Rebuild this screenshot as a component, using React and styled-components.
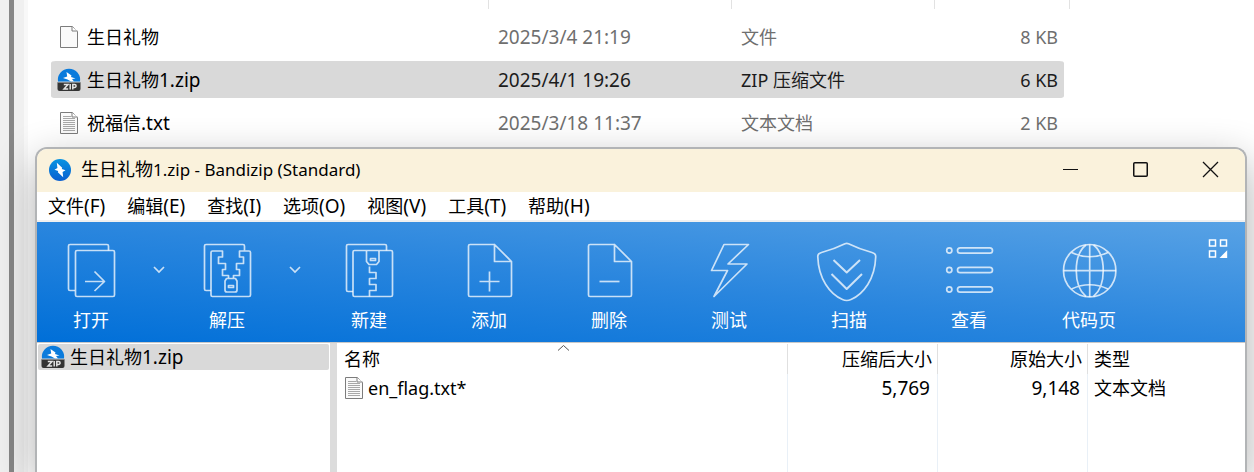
import React from 'react';
import styled, { createGlobalStyle } from 'styled-components';

const GlobalStyle = createGlobalStyle`
  * { box-sizing: border-box; }
  body {
    margin: 0;
    background: #fff;
    color: #000;
    font: 18px/24px "Noto Sans", "Noto Sans CJK SC", sans-serif;
  }
  button { font: inherit; color: inherit; border: 0; padding: 0; background: none; }
  table { border-collapse: separate; border-spacing: 0; table-layout: fixed; }
  th, td { padding: 0; font-weight: 400; text-align: left; white-space: nowrap; }
  svg { display: block; flex: none; overflow: visible; }
`;

const Desktop = styled.div`
  position: relative;
  display: flex;
  height: 100vh;
  overflow: hidden;
`;

const Gutter = styled.div`
  flex: none;
  width: 28px;
  display: flex;
  background: #f0f0f0;
  border-right: 4px solid #f8f8f8;
  padding-left: 9px;
`;

const Divider = styled.div`
  width: 5px;
  background: #878787;
`;

const Explorer = styled.main`
  flex: 1;
  min-width: 0;
  padding-left: 23px;
`;

const FileTable = styled.table`
  width: 1019px;
`;

const HeaderTick = styled.span`
  display: block;
  height: 9px;
  margin-bottom: 6px;
  border-right: 1px solid #e2e2e2;
`;

const FileCell = styled.td`
  height: 43px;
  padding-left: ${(p) => (p.$first ? 6 : 9)}px;
  padding-right: ${(p) => (p.$right ? 6 : 0)}px;
  text-align: ${(p) => (p.$right ? 'right' : 'left')};
  border: 0 solid transparent;
  border-width: 3px 0;
  background-clip: padding-box;
  background-color: ${(p) => (p.$selected ? '#d9d9d9' : 'transparent')};
  color: ${(p) => (p.$first ? '#000' : p.$selected ? '#1c1c1c' : '#6f6f6f')};
  border-radius: ${(p) => (p.$first ? '5px 0 0 5px' : p.$right ? '0 5px 5px 0' : '0')};
`;

const IconLabel = styled.span`
  display: flex;
  align-items: center;
  gap: ${(p) => p.$gap || 7}px;
`;

const Latin = styled.span`
  font-size: ${(p) => p.$size}px;
`;

const Window = styled.section`
  position: absolute;
  top: 147px;
  left: 35px;
  right: 7px;
  bottom: 0;
  display: flex;
  flex-direction: column;
  border: 2px solid #b2b4b6;
  border-bottom: 0;
  border-radius: 12px 12px 0 0;
  background: #fff;
  box-shadow: 0 14px 42px rgba(0, 0, 0, 0.32);
  overflow: hidden;
`;

const TitleBar = styled.header`
  flex: none;
  display: flex;
  align-items: center;
  height: 43px;
  padding: 0 0 2px 12px;
  background: #faf2dc;
`;

const Title = styled.h1`
  flex: 1;
  margin: 0 0 0 10px;
  font-size: 18px;
  line-height: 24px;
  font-weight: 400;
`;

const WindowButton = styled.button`
  display: grid;
  place-items: center;
  width: 70px;
  height: 41px;
`;

const MenuBar = styled.nav`
  flex: none;
  display: flex;
  gap: 22px;
  height: 30px;
  padding-left: 11px;
  border-bottom: 2px solid #f0f0f0;
`;

const MenuItem = styled.button`
  line-height: 28px;
  white-space: nowrap;
`;

const Toolbar = styled.div`
  flex: none;
  display: flex;
  height: 120px;
  background: linear-gradient(to top right, #006fd8, #2a86de 50%, #58a2e5);
  color: #fff;
`;

const ToolButton = styled.button`
  display: flex;
  flex-direction: column;
  align-items: center;
  gap: 7px;
  width: ${(p) => (p.$split ? 108 : 120)}px;
  padding-top: 19px;
`;

const DropButton = styled.button`
  display: flex;
  justify-content: center;
  width: 28px;
  padding-top: 44px;
`;

const LayoutButton = styled.button`
  align-self: flex-start;
  margin: 17px 17px 0 auto;
`;

const Panes = styled.div`
  flex: 1;
  display: flex;
  border-top: 1px solid #c8c8c8;
`;

const Tree = styled.aside`
  width: 300px;
  flex: none;
  padding: 1px;
  border-right: 7px solid #dcdcdc;
`;

const TreeItem = styled.button`
  display: flex;
  align-items: center;
  width: 100%;
  height: 26px;
  padding-left: 3px;
  border-radius: 2px;
  background: #d9d9d9;
`;

const Archive = styled.div`
  position: relative;
  flex: 1;
  min-width: 0;
  padding-top: 1px;
`;

const SortMark = styled.svg`
  position: absolute;
  top: 2px;
  left: 220px;
`;

const ArchiveTable = styled.table`
  width: 100%;
  height: 100%;
`;

const ArchiveHead = styled.th`
  height: 30px;
  padding: 0 ${(p) => (p.$right ? 5 : 0)}px 0 ${(p) => (p.$first ? 7 : 6)}px;
  text-align: ${(p) => (p.$right ? 'right' : 'left')};
  border-right: ${(p) => (p.$last ? 0 : 1)}px solid #e0e0e0;
`;

const ArchiveCell = styled.td`
  height: ${(p) => (p.$fill ? 'auto' : '28px')};
  padding: 0 ${(p) => (p.$right ? 7 : 0)}px 0 ${(p) => (p.$first ? 8 : 6)}px;
  text-align: ${(p) => (p.$right ? 'right' : 'left')};
  border-right: ${(p) => (p.$last ? 0 : 1)}px solid #e9f0f7;
`;

/* Latin runs take their own size beside the 18px Chinese ones. */
function Mixed({ children, latin = 19 }) {
  return children
    .split(/([\u4e00-\u9fff]+)/)
    .filter(Boolean)
    .map((run, i) => (/[\u4e00-\u9fff]/.test(run) ? run : <Latin key={i} $size={latin}>{run}</Latin>));
}

function ZipIcon() {
  return (
    <svg width="24" height="24" viewBox="0 0 24 24" aria-hidden="true">
      <path d="M1 14A11.200 11.200 0 1 1 23 14Z" fill="#0a7bdc" />
      <path d="M9.500 4L14.500 7.500L14 9L18.500 10.500L15 11L17 13.500H14L10.500 11.400L6 10L10.200 8.600Z" fill="#fff" />
      <path d="M.5 14h23v7a2 2 0 0 1-2 2h-19a2 2 0 0 1-2-2z" fill="#343434" />
      <path d="M.5 14h23" stroke="#cfd6dc" strokeWidth="1" />
      <path
        d="M6.800 16.500h4.200l-4 4.500h4.200M13.200 16v5.500M15.800 21.500v-5h1.800a1.300 1.300 0 0 1 0 3h-1.800"
        fill="none"
        stroke="#e4e4e4"
        strokeWidth="1.500"
      />
    </svg>
  );
}

function FileIcon({ lines }) {
  return (
    <svg width="18" height="22" viewBox="0 0 18 22" aria-hidden="true">
      <path d="M.5.5h12l5 5v16H.5z" fill="#fafafa" stroke="#7c7c7c" />
      <path d="M12 .5V5h5.500" fill="#fff" stroke="#7c7c7c" />
      {lines && (
        <path d="M3 4.500h8M3 6.500h12M3 8.500h12M3 10.500h12M3 12.500h12M3 14.500h12M3 16.500h12M3 18.500h12" stroke="#a8a8a8" />
      )}
    </svg>
  );
}

function AppIcon() {
  return (
    <svg width="22" height="22" viewBox="0 0 22 22" aria-hidden="true">
      <defs>
        <linearGradient id="app" x1="0" y1="0" x2="0" y2="1">
          <stop offset="0" stopColor="#0894e2" />
          <stop offset="1" stopColor="#0a5fd0" />
        </linearGradient>
      </defs>
      <circle cx="11" cy="11" r="11" fill="url(#app)" />
      <path d="M7.800 3.800L13.200 8.800L12.800 10L16.500 11.200L13.600 13L14.200 18.200L8.800 13.200L9.200 12L5.500 10.800L8.400 9Z" fill="#fff" />
    </svg>
  );
}

const glyphs = {
  open: (
    <>
      <path d="M14 49.500H9A1.500 1.500 0 0 1 7.500 48V5A1.500 1.500 0 0 1 9 3.500H46A1.500 1.500 0 0 1 47.500 5V9.500" />
      <rect x="14.500" y="9.500" width="39" height="46" rx="1.500" />
      <path d="M24 40.500H43.500M33.500 30.500L43.500 40.500L33.500 50" />
    </>
  ),
  extract: (
    <>
      <path d="M14 49.500H9A1.500 1.500 0 0 1 7.500 48V5A1.500 1.500 0 0 1 9 3.500H46A1.500 1.500 0 0 1 47.500 5V9.500" />
      <path d="M31.500 37V34.500H25.500V28.500H28.500V22.500H21.500V16H25.500V10H15.500A1.500 1.500 0 0 0 14 11.500V54A1.500 1.500 0 0 0 15.500 55.500H52A1.500 1.500 0 0 0 53.500 54V11.500A1.500 1.500 0 0 0 52 10H42.500V16H46.500V22.500H39.500V28.500H42.500V34.500H36.500V37" />
      <path d="M29.500 37.500H38.500L40 40V49A2 2 0 0 1 38 51H30A2 2 0 0 1 28 49V40Z" />
      <rect x="31.500" y="44.500" width="5" height="2" />
    </>
  ),
  create: (
    <>
      <path d="M14 50.500H9A1.500 1.500 0 0 1 7.500 49V5A1.500 1.500 0 0 1 9 3.500H46A1.500 1.500 0 0 1 47.500 5V9.500" />
      <rect x="14" y="9.500" width="39.500" height="46" rx="1.500" />
      <path d="M27.500 10V20.500L30 23.500H37.500L40 20.500V10" />
      <rect x="31.500" y="17.500" width="5" height="2" />
      <path d="M30.500 25.500V31.500H37V37.500H30.500V43.500H37V49.500H30.500V55.500" />
    </>
  ),
  add: (
    <>
      <path d="M35.500 3.500H11A1.500 1.500 0 0 0 9.500 5V54A1.500 1.500 0 0 0 11 55.500H51A1.500 1.500 0 0 0 52.500 54V20.500L35.500 3.500V20.500H52.500" />
      <path d="M20.500 40.500H40.500M30.500 30.500V50.500" />
    </>
  ),
  remove: (
    <>
      <path d="M35.500 3.500H11A1.500 1.500 0 0 0 9.500 5V54A1.500 1.500 0 0 0 11 55.500H51A1.500 1.500 0 0 0 52.500 54V20.500L35.500 3.500V20.500H52.500" />
      <path d="M20.500 40.500H40.500" />
    </>
  ),
  test: <path d="M25 3.500H49.500L29 23H48L15 55.500L28.500 29.500H12.500Z" />,
  scan: (
    <>
      <path d="M26 2.800Q27.700 2 29.500 2.800Q40 8 53 11.500Q57 12.500 56.700 16C56 38 44.500 53 32 58.500Q27.700 60.500 23.500 58.500C11 53 -.5 38 -1.200 16Q-1.500 12.500 2.500 11.500Q15.500 8 26 2.800Z" />
      <path d="M14.500 19L27.700 31.500L41 19M12.500 33L27.700 48L43 33" strokeWidth="2" />
    </>
  ),
  view: (
    <>
      {[9.5, 29, 48.5].map((y) => (
        <g key={y}>
          <circle cx="10.300" cy={y} r="2.600" />
          <rect x="18.500" y={y - 2.7} width="35" height="5.400" rx="2.700" />
        </g>
      ))}
    </>
  ),
  codepage: (
    <>
      <circle cx="30.700" cy="29.700" r="26.200" />
      <path d="M30.700 3.500V56M4.500 29.700H57" />
      <path d="M27 4C14 14 14 45 27 55.500M34.500 4C47.500 14 47.500 45 34.500 55.500M12.500 11.500Q30.700 20 49 11.500M12.500 48Q30.700 39.500 49 48" />
    </>
  ),
};

function ToolGlyph({ name }) {
  return (
    <svg
      width="60"
      height="60"
      viewBox="0 0 60 60"
      fill="none"
      stroke="#fff"
      strokeOpacity="0.75"
      strokeWidth="1.700"
      strokeLinejoin="round"
      aria-hidden="true"
    >
      {glyphs[name]}
    </svg>
  );
}

const files = [
  { name: '生日礼物', date: '2025/3/4 21:19', type: '文件', size: '8 KB', icon: <FileIcon /> },
  { name: '生日礼物1.zip', date: '2025/4/1 19:26', type: 'ZIP 压缩文件', size: '6 KB', icon: <ZipIcon />, selected: true },
  { name: '祝福信.txt', date: '2025/3/18 11:37', type: '文本文档', size: '2 KB', icon: <FileIcon lines /> },
];

const IconSlot = styled.span`
  display: flex;
  justify-content: center;
  width: 23px;
`;

const menus = ['文件(F)', '编辑(E)', '查找(I)', '选项(O)', '视图(V)', '工具(T)', '帮助(H)'];

const tools = [
  { glyph: 'open', label: '打开', split: true },
  { glyph: 'extract', label: '解压', split: true },
  { glyph: 'create', label: '新建' },
  { glyph: 'add', label: '添加' },
  { glyph: 'remove', label: '删除' },
  { glyph: 'test', label: '测试' },
  { glyph: 'scan', label: '扫描' },
  { glyph: 'view', label: '查看' },
  { glyph: 'codepage', label: '代码页' },
];

function FileExplorer() {
  return (
    <Explorer>
      <FileTable>
        <colgroup>
          <col style={{ width: 438 }} />
          <col style={{ width: 243 }} />
          <col style={{ width: 203 }} />
          <col style={{ width: 129 }} />
          <col style={{ width: 6 }} />
        </colgroup>
        <thead>
          <tr>
            <th aria-label="名称"><HeaderTick /></th>
            <th aria-label="修改日期"><HeaderTick /></th>
            <th aria-label="类型"><HeaderTick /></th>
            <th aria-label="大小" colSpan={2}><HeaderTick /></th>
          </tr>
        </thead>
        <tbody>
          {files.map((f) => (
            <tr key={f.name}>
              <FileCell $first $selected={f.selected}>
                <IconLabel>
                  <IconSlot>{f.icon}</IconSlot>
                  <span><Mixed>{f.name}</Mixed></span>
                </IconLabel>
              </FileCell>
              <FileCell $selected={f.selected}><Mixed>{f.date}</Mixed></FileCell>
              <FileCell $selected={f.selected}>{f.type}</FileCell>
              <FileCell $selected={f.selected} $right>{f.size}</FileCell>
            </tr>
          ))}
        </tbody>
      </FileTable>
    </Explorer>
  );
}

function ArchiveList() {
  return (
    <Archive>
      <SortMark width="13" height="6" viewBox="0 0 13 6" fill="none" stroke="#555" aria-hidden="true">
        <path d="M1 5.500L6.500 .5L12 5.500" />
      </SortMark>
      <ArchiveTable>
        <colgroup>
          <col />
          <col style={{ width: 150 }} />
          <col style={{ width: 150 }} />
          <col style={{ width: 157 }} />
        </colgroup>
        <thead>
          <tr>
            <ArchiveHead $first>名称</ArchiveHead>
            <ArchiveHead $right>压缩后大小</ArchiveHead>
            <ArchiveHead $right>原始大小</ArchiveHead>
            <ArchiveHead $last>类型</ArchiveHead>
          </tr>
        </thead>
        <tbody>
          <tr>
            <ArchiveCell $first>
              <IconLabel $gap={5}>
                <FileIcon lines />
                <Mixed latin={18}>en_flag.txt*</Mixed>
              </IconLabel>
            </ArchiveCell>
            <ArchiveCell $right><Mixed>5,769</Mixed></ArchiveCell>
            <ArchiveCell $right><Mixed>9,148</Mixed></ArchiveCell>
            <ArchiveCell $last>文本文档</ArchiveCell>
          </tr>
          <tr aria-hidden="true">
            <ArchiveCell $fill />
            <ArchiveCell $fill />
            <ArchiveCell $fill />
            <ArchiveCell $fill $last />
          </tr>
        </tbody>
      </ArchiveTable>
    </Archive>
  );
}

export default function App() {
  return (
    <>
      <GlobalStyle />
      <Desktop>
        <Gutter><Divider /></Gutter>
        <FileExplorer />
        <Window>
          <TitleBar>
            <AppIcon />
            <Title><Mixed latin={17}>生日礼物1.zip - Bandizip (Standard)</Mixed></Title>
            <WindowButton aria-label="最小化">
              <svg width="15" height="15" viewBox="0 0 15 15" stroke="#111"><path d="M0 7.500H15" /></svg>
            </WindowButton>
            <WindowButton aria-label="最大化">
              <svg width="15" height="15" viewBox="0 0 15 15" fill="none" stroke="#111" strokeWidth="1.500">
                <rect x=".75" y=".75" width="13.500" height="13.500" rx="1" />
              </svg>
            </WindowButton>
            <WindowButton aria-label="关闭">
              <svg width="15" height="15" viewBox="0 0 15 15" stroke="#111" strokeWidth="1.300"><path d="M0 0L15 15M15 0L0 15" /></svg>
            </WindowButton>
          </TitleBar>
          <MenuBar>
            {menus.map((m) => <MenuItem key={m}><Mixed>{m}</Mixed></MenuItem>)}
          </MenuBar>
          <Toolbar>
            {tools.map((t) => (
              <React.Fragment key={t.glyph}>
                <ToolButton $split={t.split}>
                  <ToolGlyph name={t.glyph} />
                  {t.label}
                </ToolButton>
                {t.split && (
                  <DropButton aria-label={`${t.label}选项`}>
                    <svg width="12" height="7" viewBox="0 0 12 7" fill="none" stroke="#c9e0f6" strokeWidth="1.700">
                      <path d="M1 1L6 6L11 1" />
                    </svg>
                  </DropButton>
                )}
              </React.Fragment>
            ))}
            <LayoutButton aria-label="布局">
              <svg width="20" height="20" viewBox="0 0 20 20" fill="none" stroke="#fff" strokeWidth="1.500">
                <path d="M1.500 1h6v6h-6zM12.500 1h6v6h-6zM1.500 12h6v6h-6z" />
                <path d="M19.200 11.200V19H11.500Z" fill="#fff" stroke="none" />
              </svg>
            </LayoutButton>
          </Toolbar>
          <Panes>
            <Tree>
              <TreeItem>
                <IconLabel $gap={5}>
                  <ZipIcon />
                  <span><Mixed>生日礼物1.zip</Mixed></span>
                </IconLabel>
              </TreeItem>
            </Tree>
            <ArchiveList />
          </Panes>
        </Window>
      </Desktop>
    </>
  );
}
